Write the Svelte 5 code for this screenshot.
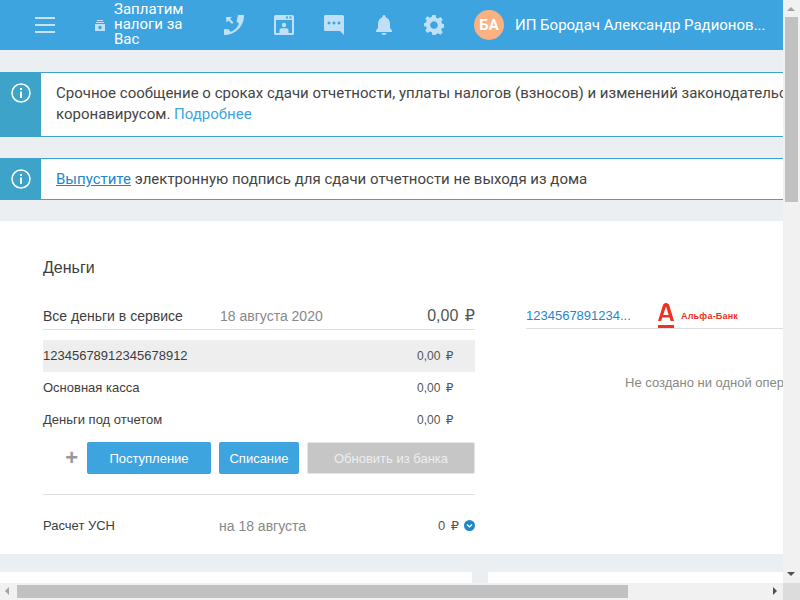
<script>
    const accounts = [
        { name: "12345678912345678912", sum: "0,00", active: true },
        { name: "Основная касса", sum: "0,00" },
        { name: "Деньги под отчетом", sum: "0,00" }
    ];
</script>

<div class="window">
    <div class="page">
        <header>
            <button class="burger" aria-label="Меню"><span></span><span></span><span></span></button>
            <div class="promo">
                <svg width="10" height="11" viewBox="0 0 10 11">
                    <path d="M2 0h6v1H2zM1 2h8v1H1z" fill="#bfe0f6" />
                    <path fill-rule="evenodd" d="M0 4h10v7H0zM5 5.8a1.7 1.7 0 1 0 .01 0z" fill="#bfe0f6" />
                </svg>
                <span>Заплатим налоги за Вас</span>
            </div>
            <div class="icons">
                <div class="icon">
                    <svg width="20" height="20" viewBox="0 0 20 20">
                        <path d="M14 0h5c.6 0 1 .4 1 1C20 11 11 20 1 20c-.6 0-1-.4-1-1v-4c0-.6.4-1 1-1l4 .5 1.500 2.500c4-1.500 7-4.500 8.500-8.500L12.500 6.500z" fill="#bfe0f6" />
                        <path d="M2 2h6L6 4l3.500 3.500L8 9 4.500 5.500l-2 2z" fill="#bfe0f6" />
                    </svg>
                </div>
                <div class="icon">
                    <svg width="20" height="20" viewBox="0 0 20 20">
                        <path fill-rule="evenodd" d="M1.500 0h17A1.500 1.500 0 0 1 20 1.500v17a1.500 1.500 0 0 1-1.500 1.500h-17A1.500 1.500 0 0 1 0 18.500v-17A1.500 1.500 0 0 1 1.500 0zM2 5v13h16V5zM12 1.500v2h2v-2zM15.500 1.500v2h2v-2z" fill="#bfe0f6" />
                        <circle cx="10" cy="10" r="2.200" fill="#bfe0f6" />
                        <path d="M5.500 18v-3c0-1 1-1.500 2-1.700h5c1 .2 2 .7 2 1.700v3z" fill="#bfe0f6" />
                    </svg>
                </div>
                <div class="icon">
                    <svg width="20" height="20" viewBox="0 0 20 20">
                        <path fill-rule="evenodd" d="M1.500 0h17A1.500 1.500 0 0 1 20 1.500V20l-4-4H1.500A1.500 1.500 0 0 1 0 14.500v-13A1.500 1.500 0 0 1 1.500 0zM5 6.500a1.500 1.500 0 1 0 .01 0zM10 6.500a1.500 1.500 0 1 0 .01 0zM15 6.500a1.500 1.500 0 1 0 .01 0z" fill="#bfe0f6" />
                    </svg>
                </div>
                <div class="icon">
                    <svg width="16" height="20" viewBox="0 0 16 20">
                        <path d="M8 0a1.500 1.500 0 0 1 1.500 1.500v.8C12.500 3.200 14 6 14 9v4l2 2.500V17H0v-1.500L2 13V9c0-3 1.500-5.800 4.500-6.700v-.8A1.500 1.500 0 0 1 8 0zM5.500 18h5a2.500 2 0 0 1-5 0z" fill="#bfe0f6" />
                    </svg>
                </div>
                <div class="icon">
                    <svg width="20" height="20" viewBox="0 0 24 24">
                        <path fill-rule="evenodd" d="M10 0h4l.6 3.200 2.300 1 2.800-1.800 2.800 2.900-1.800 2.700 1 2.400 3.300.6v4l-3.300.6-1 2.400 1.800 2.700-2.800 2.900-2.800-1.800-2.300 1L14 24h-4l-.6-3.200-2.300-1-2.800 1.800-2.800-2.900 1.800-2.700-1-2.400L-1 14v-4l3.300-.6 1-2.400-1.800-2.700 2.800-2.900 2.800 1.800 2.300-1zM12 7.500a4.500 4.500 0 1 0 .01 0z" fill="#bfe0f6" />
                    </svg>
                </div>
            </div>
            <div class="user">
                <div class="avatar">БА</div>
                <div class="user-name">ИП Бородач Александр Радионов...</div>
            </div>
        </header>

        <section class="notice first">
            <div class="notice-side">
                <svg width="20" height="20" viewBox="0 0 20 20">
                    <circle cx="10" cy="10" r="9" fill="none" stroke="#fff" stroke-width="1.500" />
                    <rect x="9" y="8.500" width="2" height="6.500" fill="#fff" />
                    <rect x="9" y="5" width="2" height="2" fill="#fff" />
                </svg>
            </div>
            <p>Срочное сообщение о сроках сдачи отчетности, уплаты налогов (взносов) и изменений законодательства в связи с<br />коронавирусом. <a href="#more" class="more">Подробнее</a></p>
        </section>

        <section class="notice second">
            <div class="notice-side">
                <svg width="20" height="20" viewBox="0 0 20 20">
                    <circle cx="10" cy="10" r="9" fill="none" stroke="#fff" stroke-width="1.500" />
                    <rect x="9" y="8.500" width="2" height="6.500" fill="#fff" />
                    <rect x="9" y="5" width="2" height="2" fill="#fff" />
                </svg>
            </div>
            <p><a href="#sign" class="issue">Выпустите</a> электронную подпись для сдачи отчетности не выходя из дома</p>
        </section>

        <main class="money">
            <div class="money-left">
                <h2>Деньги</h2>
                <div class="total">
                    <span class="total-name">Все деньги в сервисе</span>
                    <span class="total-date">18 августа 2020</span>
                    <span class="total-sum">0,00 <span class="rub">₽</span></span>
                </div>
                <div class="accounts">
                    {#each accounts as a}
                        <div class="account" class:active={a.active}>
                            <span>{a.name}</span>
                            <span class="account-sum">{a.sum} <span class="rub">₽</span></span>
                        </div>
                    {/each}
                </div>
                <div class="actions">
                    <span class="plus">+</span>
                    <button class="btn income">Поступление</button>
                    <button class="btn outcome">Списание</button>
                    <button class="btn update">Обновить из банка</button>
                </div>
                <div class="usn">
                    <span class="usn-name">Расчет УСН</span>
                    <span class="usn-date">на 18 августа</span>
                    <span class="usn-sum">0 <span class="rub">₽</span></span>
                    <svg width="11" height="11" viewBox="0 0 11 11">
                        <circle cx="5.500" cy="5.500" r="5.500" fill="#1f87ca" />
                        <path d="M3 4.500l2.500 2.500L8 4.500" fill="none" stroke="#fff" stroke-width="1.200" />
                    </svg>
                </div>
            </div>
            <div class="money-right">
                <div class="bank-row">
                    <span class="bank-account">1234567891234...</span>
                    <div class="alfa">
                        <svg width="16" height="25" viewBox="0 0 16 25">
                            <path fill-rule="evenodd" d="M8 0c1.800 0 2.800 1 3.400 2.700L16 18h-3.400l-1-3.400H4.300L3.200 18H0L4.800 2.700C5.400 1 6.300 0 8 0zM8 3.500L5.200 12h5.500z" fill="#ef3124" />
                            <rect y="22" width="16" height="3" fill="#ef3124" />
                        </svg>
                        <span>Альфа-Банк</span>
                    </div>
                </div>
                <p class="empty">Не создано ни одной операции</p>
            </div>
        </main>

        <div class="lower">
            <div></div>
            <div></div>
        </div>
    </div>

    <div class="scroll-y">
        <div class="arrow up"></div>
        <div class="thumb-y"></div>
        <div class="arrow down"></div>
    </div>
    <div class="scroll-x">
        <div class="arrow left"></div>
        <div class="thumb-x"></div>
        <div class="arrow right"></div>
    </div>
    <div class="corner"></div>
</div>

<style>
    :global(body) {
        margin: 0;
    }

    .window {
        display: grid;
        grid-template-columns: 783px 17px;
        grid-template-rows: 583px 17px;
        width: 800px;
        height: 600px;
        overflow: hidden;
        font-family: "Liberation Sans", Arial, sans-serif;
        color: #3d3d3d;
    }

    .page {
        overflow: hidden;
        background: #ebeff2;
    }

    header {
        display: flex;
        align-items: center;
        height: 50px;
        background: #3da4e0;
        font-family: Roboto, sans-serif;
        color: #fff;
    }

    .burger {
        display: flex;
        flex-direction: column;
        gap: 5px;
        width: 20px;
        margin-left: 35px;
        padding: 0;
        border: 0;
        background: none;
    }

    .burger span {
        display: block;
        height: 2px;
        background: #c5e2f6;
    }

    .promo {
        display: flex;
        align-items: center;
        gap: 9px;
        width: 101px;
        margin-left: 40px;
        font-size: 15px;
        line-height: 15px;
    }

    .promo svg {
        flex: none;
    }

    .promo span {
        margin-bottom: 2px;
    }

    .icons {
        display: flex;
        align-items: center;
        margin-left: 13px;
    }

    .icon {
        display: flex;
        justify-content: center;
        width: 50px;
    }

    .user {
        display: flex;
        align-items: center;
        margin-left: 15px;
    }

    .avatar {
        width: 30px;
        height: 30px;
        border-radius: 50%;
        background: #fbb182;
        font-size: 15px;
        font-weight: 700;
        line-height: 30px;
        text-align: center;
    }

    .user-name {
        margin-left: 11px;
        font-size: 15px;
        white-space: nowrap;
    }

    .notice {
        display: flex;
        border-top: 1px solid #3ea3cc;
        border-bottom: 1px solid #3ea3cc;
        background: #fff;
        font-family: Roboto, sans-serif;
        font-size: 15px;
        line-height: 21px;
        color: #444;
        white-space: nowrap;
        overflow: hidden;
    }

    .first {
        height: 63px;
        margin-top: 22px;
    }

    .second {
        height: 40px;
        margin-top: 21px;
    }

    .notice-side {
        display: flex;
        flex: none;
        justify-content: center;
        width: 41px;
        padding-top: 10px;
        box-sizing: border-box;
        background: #3ea3c8;
    }

    .notice p {
        margin: 0;
        padding: 10px 0 0 15px;
    }

    .more {
        color: #3da4e0;
        text-decoration: none;
    }

    .issue {
        color: #1f87ca;
    }

    .money {
        display: flex;
        height: 333px;
        margin-top: 21px;
        background: #fff;
        overflow: hidden;
    }

    .money-left {
        flex: none;
        width: 432px;
        margin-left: 43px;
    }

    h2 {
        margin: 37px 0 0;
        font-size: 16px;
        font-weight: 400;
        line-height: 20px;
    }

    .total {
        display: flex;
        align-items: baseline;
        height: 30px;
        margin-top: 21px;
        border-bottom: 1px solid #dedede;
        font-size: 14px;
        line-height: 34px;
    }

    .total-name {
        width: 177px;
    }

    .total-date {
        color: #888;
    }

    .total-sum {
        margin-left: auto;
        color: #555;
        font-size: 16px;
    }

    .rub {
        margin-left: 2px;
        font-family: "DejaVu Sans", sans-serif;
    }

    .accounts {
        margin-top: 10px;
    }

    .account {
        display: flex;
        justify-content: space-between;
        height: 32px;
        font-size: 13px;
        line-height: 32px;
    }

    .account.active {
        background: #eee;
    }

    .account-sum {
        width: 38px;
        margin-right: 20px;
        color: #555;
        font-size: 12px;
        white-space: nowrap;
    }

    .actions {
        display: flex;
        align-items: center;
        margin-top: 6px;
        padding-bottom: 20px;
        border-bottom: 1px solid #dedede;
    }

    .plus {
        width: 44px;
        padding-right: 9px;
        box-sizing: border-box;
        color: #999;
        font-size: 22px;
        font-weight: 700;
        line-height: 30px;
        text-align: right;
    }

    .btn {
        height: 32px;
        padding: 0;
        border: 0;
        border-radius: 2px;
        font-family: inherit;
        font-size: 13px;
        color: #fff;
        background: #3da4e0;
    }

    .income {
        width: 124px;
    }

    .outcome {
        width: 80px;
        margin-left: 8px;
    }

    .update {
        width: 168px;
        margin-left: 8px;
        border: 1px solid #e4e4e4;
        background: #c6c6c6;
        color: #eee;
    }

    .usn {
        display: flex;
        align-items: center;
        height: 57px;
        padding-top: 2px;
        font-size: 13px;
    }

    .usn-name {
        width: 176px;
    }

    .usn-date {
        color: #888;
        font-size: 14px;
    }

    .usn-sum {
        margin-left: auto;
        margin-right: 5px;
        color: #555;
        font-size: 13px;
    }

    .money-right {
        flex: none;
        width: 257px;
        margin-left: 51px;
    }

    .bank-row {
        display: flex;
        align-items: flex-end;
        height: 30px;
        margin-top: 77px;
        border-bottom: 1px solid #dedede;
        font-size: 13px;
    }

    .bank-account {
        width: 132px;
        padding-bottom: 4px;
        color: #1f87ca;
        line-height: 16px;
        white-space: nowrap;
    }

    .alfa {
        display: flex;
        align-items: center;
        gap: 7px;
        color: #ef3124;
        font-size: 9px;
        font-weight: 700;
        letter-spacing: 0.2px;
    }

    .empty {
        margin: 46px 0 0 99px;
        color: #888;
        font-size: 13px;
        white-space: nowrap;
    }

    .lower {
        display: flex;
        justify-content: space-between;
        height: 11px;
        margin-top: 18px;
    }

    .lower div {
        height: 11px;
        background: #fff;
    }

    .lower div:first-child {
        width: 472px;
    }

    .lower div:last-child {
        width: 295px;
    }

    .scroll-y {
        display: flex;
        flex-direction: column;
        background: #f1f1f1;
    }

    .thumb-y {
        height: 185px;
        margin: 0 2px;
        background: #c1c1c1;
    }

    .scroll-x {
        display: flex;
        align-items: stretch;
        background: #f1f1f1;
    }

    .thumb-x {
        width: 611px;
        margin: 2px 0;
        background: #c1c1c1;
    }

    .corner {
        background: #dcdcdc;
    }

    .arrow {
        position: relative;
        flex: none;
        width: 17px;
        height: 17px;
    }

    .arrow::after {
        content: "";
        position: absolute;
        width: 0;
        height: 0;
        border: 4px solid transparent;
    }

    .up::after {
        left: 4px;
        top: 3px;
        border-bottom-color: #a3a3a3;
    }

    .down {
        margin-top: auto;
    }

    .down::after {
        left: 4px;
        top: 6px;
        border-top-color: #505050;
    }

    .left::after {
        left: 1px;
        top: 4px;
        border-right-color: #a3a3a3;
    }

    .right {
        margin-left: auto;
    }

    .right::after {
        left: 7px;
        top: 4px;
        border-left-color: #505050;
    }
</style>
